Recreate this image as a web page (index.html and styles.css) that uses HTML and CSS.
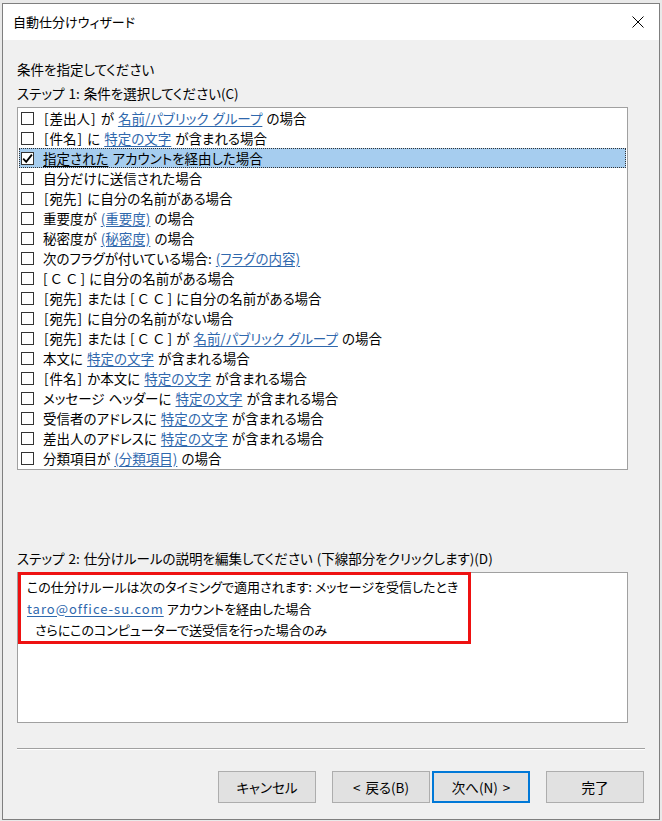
FILE: index.html
```html
<!DOCTYPE html>
<html lang="ja">
<head>
<meta charset="utf-8">
<title>自動仕分けウィザード</title>
<link rel="stylesheet" href="styles.css">
</head>
<body>
<div class="window">
  <div class="titlebar">
    <span class="title">自動仕分けウィザード</span>
    <svg class="close" width="12" height="12" viewBox="0 0 12 12"><path d="M0.5 0.5 L11.5 11.5 M11.5 0.5 L0.5 11.5" stroke="#000" stroke-width="1" fill="none"/></svg>
  </div>
  <div class="content">
    <div class="label first">条件を指定してください</div>
    <div class="label">ステップ 1: 条件を選択してください(C)</div>
    <div class="list">
      <div class="row"><span class="cb"></span><span class="txt"><span class="br">[</span>差出人<span class="br">]</span> が <a class="lnk">名前/パブリック グループ</a> の場合</span></div>
      <div class="row"><span class="cb"></span><span class="txt"><span class="br">[</span>件名<span class="br">]</span> に <a class="lnk">特定の文字</a> が含まれる場合</span></div>
      <div class="row selected"><span class="cb checked"><svg width="11" height="11" viewBox="0 0 11 11"><path d="M1.2 5.6 L4.2 8.8 L9.9 1.6" stroke="#000" stroke-width="1.8" fill="none"/></svg></span><span class="txt"><span class="uline">指定された</span> アカウントを経由した場合</span></div>
      <div class="row"><span class="cb"></span><span class="txt">自分だけに送信された場合</span></div>
      <div class="row"><span class="cb"></span><span class="txt"><span class="br">[</span>宛先<span class="br">]</span> に自分の名前がある場合</span></div>
      <div class="row"><span class="cb"></span><span class="txt">重要度が <a class="lnk">(重要度)</a> の場合</span></div>
      <div class="row"><span class="cb"></span><span class="txt">秘密度が <a class="lnk">(秘密度)</a> の場合</span></div>
      <div class="row"><span class="cb"></span><span class="txt">次のフラグが付いている場合: <a class="lnk">(フラグの内容)</a></span></div>
      <div class="row"><span class="cb"></span><span class="txt">[<span class="fw">ＣＣ</span>] に自分の名前がある場合</span></div>
      <div class="row"><span class="cb"></span><span class="txt"><span class="br">[</span>宛先<span class="br">]</span> または [<span class="fw">ＣＣ</span>] に自分の名前がある場合</span></div>
      <div class="row"><span class="cb"></span><span class="txt"><span class="br">[</span>宛先<span class="br">]</span> に自分の名前がない場合</span></div>
      <div class="row"><span class="cb"></span><span class="txt"><span class="br">[</span>宛先<span class="br">]</span> または [<span class="fw">ＣＣ</span>] が <a class="lnk">名前/パブリック グループ</a> の場合</span></div>
      <div class="row"><span class="cb"></span><span class="txt">本文に <a class="lnk">特定の文字</a> が含まれる場合</span></div>
      <div class="row"><span class="cb"></span><span class="txt"><span class="br">[</span>件名<span class="br">]</span> か本文に <a class="lnk">特定の文字</a> が含まれる場合</span></div>
      <div class="row"><span class="cb"></span><span class="txt">メッセージ ヘッダーに <a class="lnk">特定の文字</a> が含まれる場合</span></div>
      <div class="row"><span class="cb"></span><span class="txt">受信者のアドレスに <a class="lnk">特定の文字</a> が含まれる場合</span></div>
      <div class="row"><span class="cb"></span><span class="txt">差出人のアドレスに <a class="lnk">特定の文字</a> が含まれる場合</span></div>
      <div class="row"><span class="cb"></span><span class="txt">分類項目が <a class="lnk">(分類項目)</a> の場合</span></div>
    </div>
    <div class="label step2">ステップ 2: 仕分けルールの説明を編集してください (下線部分をクリックします)(D)</div>
    <div class="desc">
      <div class="mark">
        <div class="dline">この仕分けルールは次のタイミングで適用されます: メッセージを受信したとき</div>
        <div class="dline"><a class="lnk email">taro@office-su.com</a> アカウントを経由した場合</div>
        <div class="dline indent">さらにこのコンピューターで送受信を行った場合のみ</div>
      </div>
    </div>
    <div class="sep"></div>
    <div class="buttons">
      <button class="btn">キャンセル</button>
      <button class="btn gap-l">&lt; 戻る(B)</button>
      <button class="btn default">次へ(N) &gt;</button>
      <button class="btn gap-l">完了</button>
    </div>
  </div>
</div>
</body>
</html>
```
FILE: styles.css
```css
* { box-sizing: border-box; }
html, body { margin: 0; padding: 0; }
body {
  width: 662px;
  height: 821px;
  overflow: hidden;
  background: #e9e9e9;
  font-family: "Noto Sans CJK JP", "Noto Sans", sans-serif;
  font-feature-settings: "palt";
  font-size: 13.5px;
  word-spacing: 1px;
  color: #000;
  padding: 3px 0 0 2px;
}
.window {
  width: 658px;
  height: 817px;
  border: 1px solid #7f7f7f;
  background: #f0f0f0;
  display: flex;
  flex-direction: column;
}
.titlebar {
  height: 36px;
  background: #fff;
  display: flex;
  align-items: center;
  justify-content: space-between;
  padding: 0 15px 0 10px;
}
.title { font-size: 13px; line-height: 16px; }
.close { display: block; }
.content {
  padding: 0 13px 0 14px;
  display: flex;
  flex-direction: column;
}
.label { line-height: 20px; height: 20px; white-space: nowrap; }
.label.first { margin-top: 19px; margin-bottom: 4px; }
.list {
  margin-top: 4px;
  width: 611px;
  height: 363px;
  background: #fff;
  border: 1px solid #a0a0a0;
  padding: 0 0 0 1px;
}
.row {
  height: 20px;
  display: flex;
  align-items: center;
  padding-left: 2px;
  margin-right: 1px;
  white-space: nowrap;
}
.row.selected {
  background: #a6cdef;
  outline: 1px dotted #333;
  outline-offset: -1px;
}
.cb {
  width: 13px;
  height: 13px;
  border: 1px solid #333;
  background: #fff;
  display: flex;
  align-items: center;
  justify-content: center;
  flex: none;
}
.txt { margin-left: 9px; line-height: 20px; }
.br { padding: 0 1px; }
.fw { font-feature-settings: normal; letter-spacing: 2px; padding-left: 2px; }
.lnk { color: #2f68ad; text-decoration: underline; text-underline-offset: 2px; }
.uline { text-decoration: underline; text-underline-offset: 2px; }
.label.step2 { margin-top: 78px; }
.desc {
  margin-top: 4px;
  width: 611px;
  height: 151px;
  background: #fff;
  border: 1px solid #a0a0a0;
}
.mark {
  margin-top: -1px;
  width: 453px;
  height: 72px;
  border: 3px solid #ee1111;
  padding: 1px 0 0 6px;
  font-size: 13px;
  word-spacing: 0;
}
.dline { line-height: 21.5px; height: 21.5px; white-space: nowrap; }
.dline.indent { padding-left: 8px; }
.email { letter-spacing: 1px; }
.sep {
  margin-top: 25px;
  width: 628px;
  height: 2px;
  border-top: 1px solid #a0a0a0;
  border-bottom: 1px solid #fff;
}
.buttons {
  margin-top: 21px;
  display: flex;
  justify-content: flex-end;
  width: 627px;
}
.btn {
  width: 98px;
  height: 32px;
  margin-left: 2px;
  background: #e1e1e1;
  border: 1px solid #adadad;
  font-family: inherit;
  font-feature-settings: "palt";
  font-size: 13.5px;
  word-spacing: 2px;
  color: #000;
  padding: 0;
}
.btn.gap-l { margin-left: 16px; }
.btn.default { border: 2px solid #0078d7; }
```
